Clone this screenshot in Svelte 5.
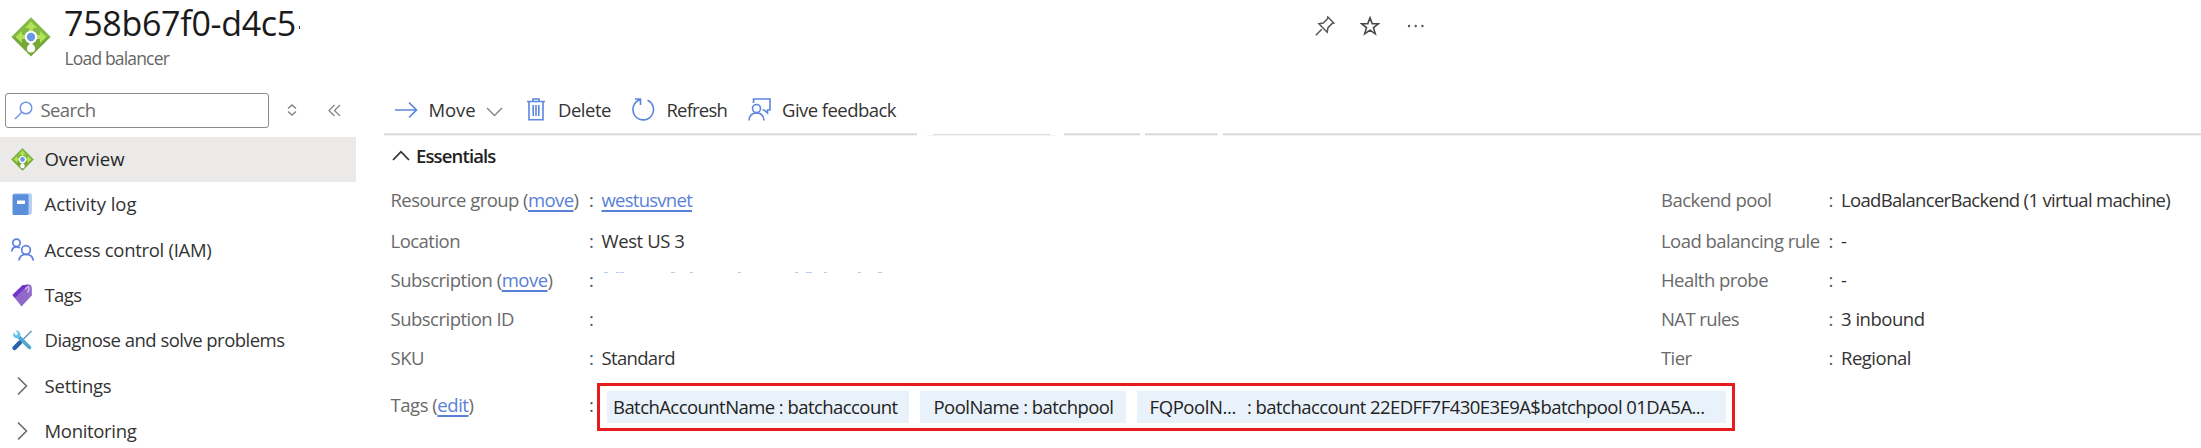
<script>
  const nav = [
    { id: 'lb', text: 'Overview', w: 78, active: true },
    { id: 'log', text: 'Activity log', w: 90 },
    { id: 'iam', text: 'Access control (IAM)', w: 165 },
    { id: 'tag', text: 'Tags', w: 35 },
    { id: 'tools', text: 'Diagnose and solve problems', w: 238 },
    { id: 'chev', text: 'Settings', w: 65 },
    { id: 'chev', text: 'Monitoring', w: 90 }
  ];
  const left = [
    { label: 'Resource group', action: 'move', w: 186, value: 'westusvnet', vw: 88.5, link: true, h: 41 },
    { label: 'Location', w: 67.5, value: 'West US 3', vw: 81, h: 40.4 },
    { label: 'Subscription', action: 'move', w: 160, masked: true, h: 38.4 },
    { label: 'Subscription ID', w: 121.5, h: 38.8 },
    { label: 'SKU', w: 31.5, value: 'Standard', vw: 71.5, h: 39.2 }
  ];
  const right = [
    { label: 'Backend pool', w: 108.5, value: 'LoadBalancerBackend (1 virtual machine)', vw: 327, h: 41 },
    { label: 'Load balancing rule', w: 156.5, value: '-', vw: 5.5, h: 40.4 },
    { label: 'Health probe', w: 105, value: '-', vw: 5.5, h: 38.4 },
    { label: 'NAT rules', w: 76, value: '3 inbound', vw: 81.5, h: 38.8 },
    { label: 'Tier', w: 28.5, value: 'Regional', vw: 68, h: 39.2 }
  ];
  const specks = [[2, 4], [14, 3], [18, 4], [69, 4], [88, 3], [136, 3], [193, 3], [204, 6], [222, 3], [256, 3], [276, 4]];

  // Tracks a label so that its glyphs span the given column width.
  function fit(node, width) {
    const natural = node.getBoundingClientRect().width;
    const n = node.textContent.length;
    if (n > 1) node.style.letterSpacing = ((width + 2 - natural) / n).toFixed(3) + 'px';
  }
</script>

{#snippet balancer(size)}
  <svg width={size} height={size} viewBox="0 0 40 40">
    <path d="M20 .5 39.500 20 20 39.500 .5 20Z" fill="#76a83a" />
    <path d="M20 .5 39.500 20H.5Z" fill="#83b944" />
    <path d="M20 4.500 26 11h-4v6h-4v-6h-4ZM4.500 20 11 14v4h6v4h-6v4ZM35.500 20 29 14v4h-6v4h6v4Z" fill="#b3e356" />
    <path d="M20 22v10" stroke="#fff" stroke-width="3.500" />
    <circle cx="20" cy="31.500" r="4" fill="#fff" />
    <circle cx="20" cy="20" r="6.300" fill="#fff" />
    <circle cx="20" cy="20" r="4.200" fill="#6c97e6" />
  </svg>
{/snippet}

{#snippet icon(id)}
  {#if id === 'lb'}
    {@render balancer(23)}
  {:else if id === 'log'}
    <svg width="22" height="23" viewBox="0 0 22 23">
      <rect x="2" y=".5" width="18.500" height="21" rx="1.500" fill="#8fb4e8" />
      <path d="M17 1h2.500a1 1 0 0 1 1 1v18a1 1 0 0 1-1 1H17Z" fill="#b5cdf2" />
      <rect x="1.500" y="1.500" width="16" height="20.500" rx="1" fill="#5a8fdc" />
      <rect x="6" y="7.500" width="8" height="3.500" fill="#fff" />
    </svg>
  {:else if id === 'iam'}
    <svg width="23" height="23" viewBox="0 0 23 23" fill="none" stroke="#5b7fe0" stroke-width="1.700">
      <circle cx="5.500" cy="4.800" r="3.700" />
      <path d="M.8 13.500c.2-3 2-4.600 4.700-4.600 1.400 0 2.500.4 3.300 1.200" />
      <circle cx="15" cy="12" r="4.300" />
      <path d="M8 22.500c.4-3.700 3-6 7-6s6.700 2.300 7.200 6" />
    </svg>
  {:else if id === 'tag'}
    <svg width="23" height="23" viewBox="0 0 23 23">
      <path d="M1.500 11 11.500 1.200 17.500.6Q20.500.6 20.800 4V11.500L10.500 22.500Z" fill="#9268c8" />
      <path d="M1.500 11 11.500 1.200 17.500.6 4 14Z" fill="#7136c9" />
      <path d="M14.500 5.500c1.500-3.500 3.500-3.500 3.500-1s-1 3-1.500 4" fill="none" stroke="#e4d6f5" stroke-width="1.200" />
    </svg>
  {:else if id === 'tools'}
    <svg width="23" height="23" viewBox="0 0 23 23" fill="none">
      <path d="M20.500 2 9.500 13" stroke="#6f9fbd" stroke-width="1.700" />
      <path d="M9 13.500 3.500 19" stroke="#2b62a8" stroke-width="4.500" stroke-linecap="round" />
      <path d="M7.500 7.500 18.500 18.500" stroke="#4ea5ce" stroke-width="3.600" stroke-linecap="round" />
      <path d="M2.500 3.500C1 8 5 10.500 8.500 9L9.500 5.500C9 2.500 7 1.200 4.500 1.500L7 4.500 5.200 6.500Z" fill="#63c3e6" />
    </svg>
  {:else}
    <svg width="23" height="20" viewBox="0 0 23 20" fill="none" stroke="#6a6a6a" stroke-width="1.600"><path d="m7 1.500 8.500 8.500L7 18.500" /></svg>
  {/if}
{/snippet}

{#snippet rows(list)}
  {#each list as r}
    <div class="row" style:height="{r.h}px">
      <div class="key"><span use:fit={r.w}>{r.label}{#if r.action}{' '}(<a href="#top">{r.action}</a>){/if}</span></div>
      <div class="colon">:</div>
      <div class="val">
        {#if r.masked}
          <div class="masked">{#each specks as s}<i style:left="{s[0]}px" style:width="{s[1]}px"></i>{/each}</div>
        {:else if r.link}
          <span use:fit={r.vw}><a href="#top">{r.value}</a></span>
        {:else if r.value}
          <span use:fit={r.vw}>{r.value}</span>
        {/if}
      </div>
    </div>
  {/each}
{/snippet}

<div class="page">
  <header>
    <div class="logo">{@render balancer(40)}</div>
    <div class="titles">
      <h1><span use:fit={230}>758b67f0-d4c5</span><i></i></h1>
      <p><span use:fit={102.5}>Load balancer</span></p>
    </div>
    <div class="head-actions">
      <svg width="20" height="20" viewBox="0 0 20 20" fill="none" stroke="#555" stroke-width="1.500"><path d="m.8 19.200 6-6M12.800 1l6 6-1.600.4-4.200 4.200-.8 4.600-8.300-8.400 4.300-.7L12.400 3Z" /></svg>
      <svg width="20" height="20" viewBox="0 0 20 20" fill="none" stroke="#484848" stroke-width="1.600"><path d="m10 1.800 2.200 5.800 6.200.2-4.900 3.800 1.800 6.200-5.300-3.600-5.300 3.600 1.800-6.200L1.600 7.800l6.200-.2Z" /></svg>
      <svg width="20" height="20" viewBox="0 0 20 20" fill="#555"><circle cx="4" cy="10" r="1.200" /><circle cx="10.700" cy="10" r="1.200" /><circle cx="17.400" cy="10" r="1.200" /></svg>
    </div>
  </header>

  <div class="body">
    <aside>
      <div class="searchrow">
        <div class="search">
          <svg width="19" height="19" viewBox="0 0 19 19" fill="none" stroke="#7597e3" stroke-width="1.500"><circle cx="12" cy="7" r="5.800" /><path d="M7.800 11.200 1 18" /></svg>
          <span use:fit={53}>Search</span>
        </div>
        <svg class="sort" width="10" height="12" viewBox="0 0 10 12" fill="none" stroke="#858585" stroke-width="1.500"><path d="m1 4.500 4-3.500 4 3.500M1 7.500 5 11l4-3.500" /></svg>
        <svg class="fold" width="13" height="13" viewBox="0 0 13 13" fill="none" stroke="#858585" stroke-width="1.300"><path d="M6.500 1 1 6.500 6.500 12M12 1 6.500 6.500 12 12" /></svg>
      </div>
      <nav>
        {#each nav as n}
          <div class="item" class:active={n.active}>
            <div class="ico">{@render icon(n.id)}</div>
            <span use:fit={n.w}>{n.text}</span>
          </div>
        {/each}
      </nav>
    </aside>

    <main>
      <div class="toolbar">
        <div class="tool move">
          <svg width="23" height="18" viewBox="0 0 23 18" fill="none" stroke="#5c86dc" stroke-width="1.700"><path d="M0 9h21.500M14 1.500 21.500 9 14 16.500" /></svg>
          <span use:fit={45}>Move</span>
          <svg class="down" width="17" height="10" viewBox="0 0 17 10" fill="none" stroke="#888" stroke-width="1.500"><path d="m1 1 7.500 7.500L16 1" /></svg>
        </div>
        <div class="tool del">
          <svg width="18" height="23" viewBox="0 0 18 23" fill="none" stroke="#5c86dc" stroke-width="1.600"><path d="M0 3.500h18M6 3V1h6v2M2 3.500v18.300h14V3.500M6.200 7v11M9 7v11M11.800 7v11" /></svg>
          <span use:fit={51}>Delete</span>
        </div>
        <div class="tool ref">
          <svg width="23" height="23" viewBox="0 0 23 23" fill="none" stroke="#5c86dc" stroke-width="1.600"><path d="M8 1.800A10.300 10.300 0 1 0 15.500 2.200M3 1h5.500v6" /></svg>
          <span use:fit={58.5}>Refresh</span>
        </div>
        <div class="tool fb">
          <svg width="23" height="23" viewBox="0 0 23 23" fill="none" stroke="#5c86dc" stroke-width="1.600"><path d="M5.500 5V1H22v11h-2.500v3L16 12h-1.500" /><circle cx="8.500" cy="10.500" r="4" /><path d="M1 22.500c.3-4.500 3-7.500 7.500-7.500s7.200 3 7.500 7.500" /></svg>
          <span use:fit={112}>Give feedback</span>
        </div>
      </div>
      <div class="rule"><i></i><i class="thin"></i><i></i><i></i><i></i></div>
      <div class="essentials">
        <svg width="18" height="11" viewBox="0 0 18 11" fill="none" stroke="#333" stroke-width="1.800"><path d="m1 10 8-8.300L17 10" /></svg>
        <span use:fit={77.5}>Essentials</span>
      </div>
      <div class="cols">
        <section class="first">{@render rows(left)}</section>
        <section class="second">{@render rows(right)}</section>
      </div>
      <div class="tagrow">
        <div class="key"><span use:fit={81}>Tags (<a href="#top">edit</a>)</span></div>
        <div class="colon">:</div>
        <div class="chips">
          <div class="chip one"><span use:fit={282.5}>BatchAccountName : batchaccount</span></div>
          <div class="chip two"><span use:fit={178}>PoolName : batchpool</span></div>
          <div class="chip three"><span use:fit={84.5}>FQPoolN...</span><span use:fit={455.5}>: batchaccount 22EDFF7F430E3E9A$batchpool 01DA5A...</span></div>
        </div>
      </div>
    </main>
  </div>
</div>

<style>
  .page { width: 2201px; height: 448px; overflow: hidden; background: #fff; font: 18.500px/24px "Open Sans", "Noto Sans", sans-serif; color: #333; display: flex; flex-direction: column; }
  .page * { box-sizing: border-box; }
  svg { display: block; flex: none; }
  span { white-space: pre; display: inline-block; flex: none; }
  a { color: #5a80d8; text-decoration: underline; text-decoration-thickness: 1.500px; text-underline-offset: 3px; }
  header { height: 92px; display: flex; flex: none; }
  .logo { width: 64px; padding: 17px 0 0 10.500px; }
  .titles { width: 1251px; }
  h1 { margin: 0; height: 46px; font-size: 34px; line-height: 46px; font-weight: 400; color: #1b1b1b; display: flex; align-items: center; }
  h1 i { width: 1px; height: 3px; background: #333; margin: 8px 0 0 3px; }
  p { margin: 0; font-size: 17.500px; line-height: 24px; color: #666; padding-left: .5px; }
  .head-actions { display: flex; gap: 25px; padding-top: 16px; }
  .body { display: flex; flex: 1; }
  aside { width: 384px; flex: none; }
  .searchrow { display: flex; align-items: center; height: 36px; margin-bottom: 8.500px; padding-left: 4.500px; }
  .search { width: 264px; height: 35px; border: 1.500px solid #8c8c8c; border-radius: 3px; display: flex; align-items: center; padding-left: 8px; gap: 8px; color: #6a6a6a; }
  .sort { margin-left: 18px; }
  .fold { margin-left: 31px; }
  .item { width: 356px; height: 45.300px; display: flex; align-items: center; padding-left: 10.500px; }
  .active { background: #ebeae9; color: #262626; }
  .ico { width: 34px; flex: none; }
  main { flex: 1; }
  .toolbar { height: 41px; display: flex; padding: 0 0 6px 11px; }
  .tool { display: flex; align-items: center; flex: none; }
  .move { width: 132px; gap: 10.500px; }
  .move .down { margin-top: 4px; }
  .del { width: 105px; gap: 13px; }
  .ref { width: 116px; gap: 11.500px; }
  .fb { gap: 11px; }
  .rule { display: flex; height: 3px; }
  .rule i { height: 3px; background: linear-gradient(#e3e3e3 1px, #dadada 1px 2px, #f3f3f3 2px); }
  .rule i:nth-child(1) { width: 533px; margin-right: 10px; }
  .rule .thin { width: 128px; margin-right: 9px; background: linear-gradient(#dcdcdc, #dcdcdc) 6px 1px / 117px 1px no-repeat, linear-gradient(#f3f3f3, #f3f3f3) 0 2px / 100% 1px no-repeat; }
  .rule i:nth-child(3) { width: 76px; margin-right: 5px; }
  .rule i:nth-child(4) { width: 73px; margin-right: 5px; }
  .rule i:nth-child(5) { flex: 1; }
  .essentials { height: 43.500px; display: flex; align-items: center; gap: 6px; padding: 0 0 4px 8px; color: #222; font-weight: 600; }
  .cols { display: flex; }
  .first { width: 1270.500px; padding-left: 6.500px; }
  .second { flex: 1; padding-left: 6.500px; }
  .row { display: flex; align-items: center; }
  .key { width: 198.500px; flex: none; color: #6a6a6a; }
  .second .key { width: 167.500px; }
  .colon { width: 12.500px; flex: none; color: #555; }
  .masked { position: relative; height: 24px; }
  .masked i { position: absolute; top: 4px; height: 1px; background: #b9cdf3; }
  .tagrow { display: flex; align-items: center; padding-left: 6.500px; height: 52px; margin-top: 3.700px; }
  .tagrow .key, .tagrow .colon { padding-bottom: 3px; }
  .tagrow .colon { width: 8px; }
  .chips { width: 1137.500px; height: 48px; border: 3px solid #e81c1c; display: flex; align-items: center; gap: 11px; padding-left: 6.500px; color: #222; flex: none; }
  .chip { height: 32px; background: #e9f2fb; display: flex; align-items: center; }
  .one { width: 302.500px; padding-left: 6.500px; }
  .two { width: 206px; padding-left: 13.500px; }
  .three { width: 589px; padding-left: 12.500px; gap: 11px; }
</style>
